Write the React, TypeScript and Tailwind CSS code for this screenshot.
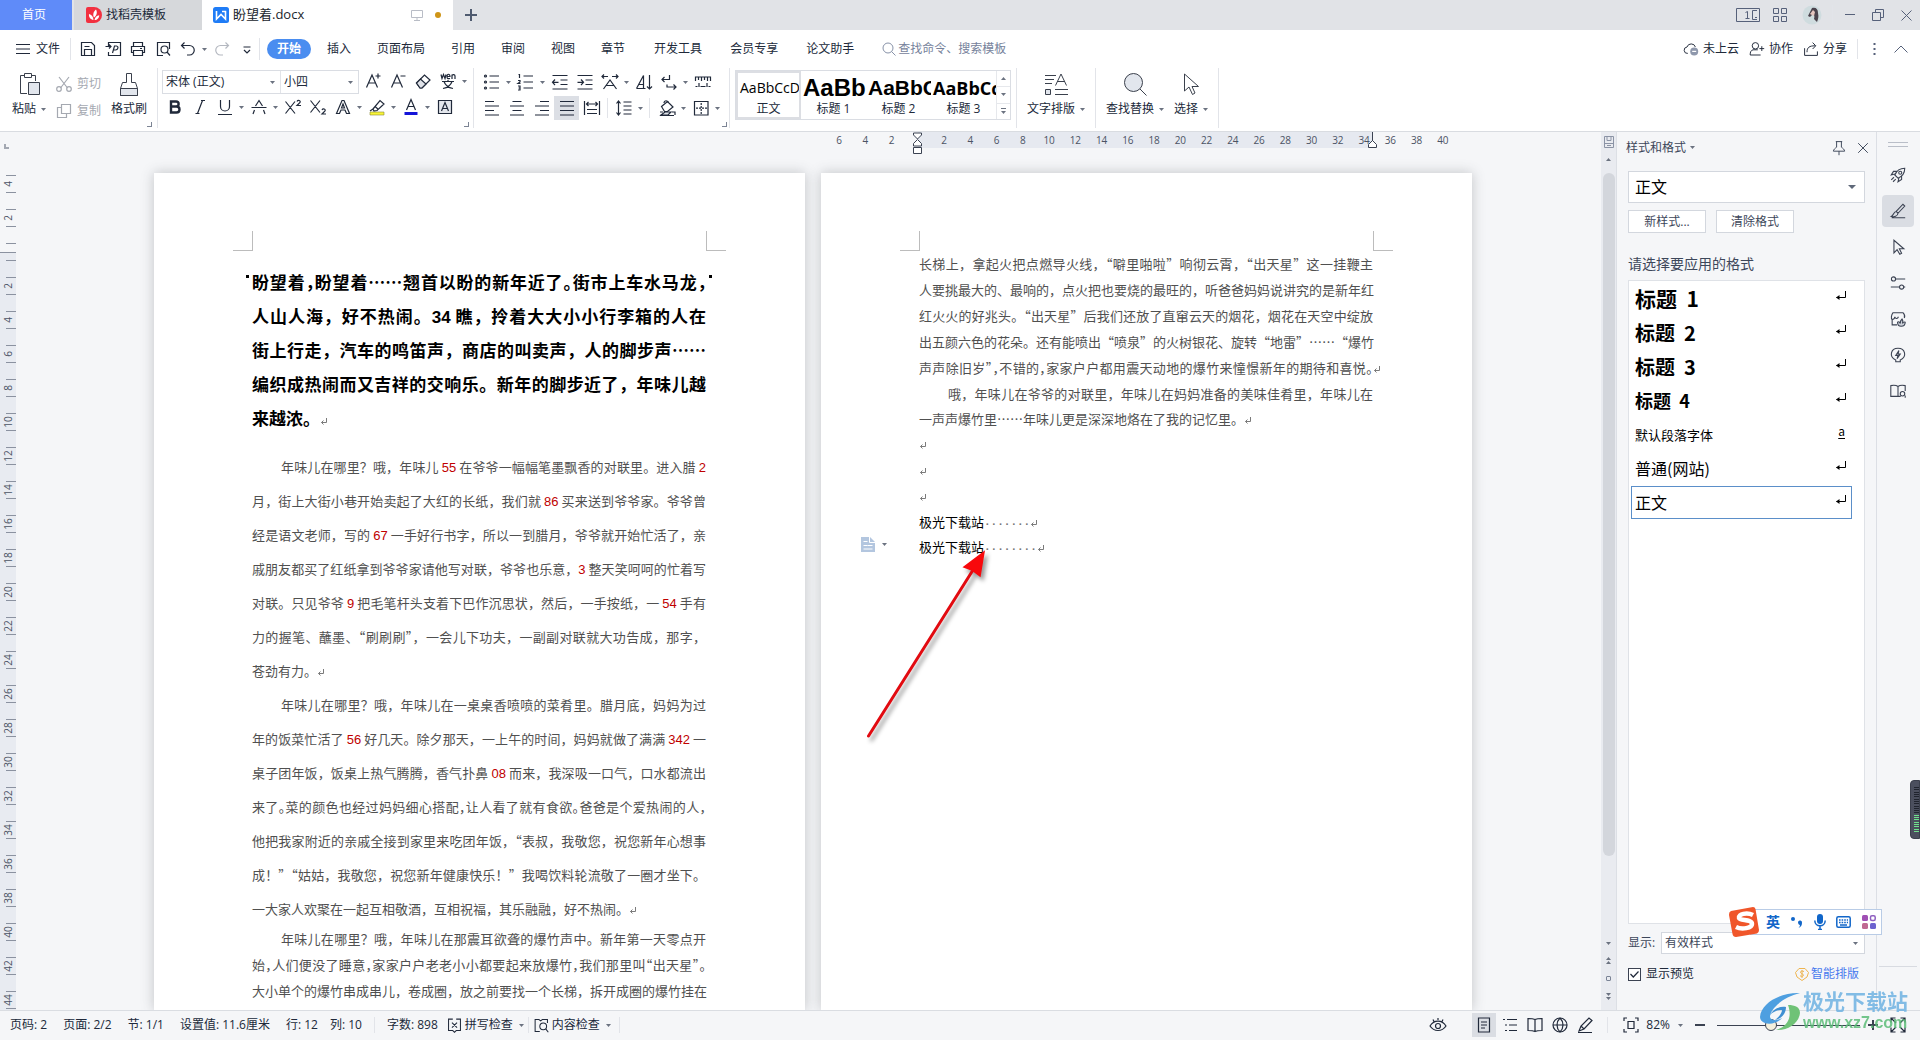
import type { ReactNode } from "react";

type IconProps = { children: ReactNode; className?: string; size?: number };

function Icon({ children, className = "", size = 20 }: IconProps) {
  return (
    <svg
      width={size}
      height={size}
      viewBox="0 0 20 20"
      fill="none"
      stroke="currentColor"
      strokeWidth="1.2"
      className={`shrink-0 ${className}`}
      aria-hidden="true"
    >
      {children}
    </svg>
  );
}

function Caret({ className = "" }: { className?: string }) {
  return (
    <svg width="5" height="3" viewBox="0 0 5 3" className={`shrink-0 fill-[#6b7280] ${className}`} aria-hidden="true">
      <path d="M0 0h5L2.5 3z" />
    </svg>
  );
}

function Tool({ label, children, caret, active }: { label: string; children: ReactNode; caret?: boolean; active?: boolean }) {
  return (
    <button type="button" aria-label={label} className="flex h-6 items-center">
      <span className={`flex h-6 w-[25px] items-center justify-center ${active ? "bg-[#dcdfe5]" : ""}`}>
        <Icon>{children}</Icon>
      </span>
      {caret && (
        <span className="flex w-[9px] justify-center">
          <Caret />
        </span>
      )}
    </button>
  );
}

function Divider({ className = "" }: { className?: string }) {
  return <div className={`w-px shrink-0 bg-[#e2e4e9] ${className}`} />;
}

function TabBar() {
  return (
    <header className="flex h-[30px] shrink-0 bg-[#e1e3e7]">
      <button type="button" className="w-[72px] bg-[#5f8bf9] pr-1 text-xs text-white">
        首页
      </button>
      <button type="button" className="ml-0.5 flex w-32 items-center gap-1 bg-[#d6d8db] pl-3 text-xs">
        <svg width="16" height="16" viewBox="0 0 16 16" aria-hidden="true">
          <path d="M0 2a2 2 0 0 1 2-2h6a8 8 0 0 1 0 16H2a2 2 0 0 1-2-2z" fill="#f2303f" />
          <path d="M7.500 13C4.500 12.500 2.500 10 3 7c2.500.500 4.500 2.500 4.500 6zM8 10.500C6.500 7.500 7.500 4.500 10 2.500c1.500 2.500 1 6-2 8zM8.500 13c.500-2.500 2-4.500 4.700-4.800 0 2.600-1.700 4.800-4.700 4.800z" fill="#fff" />
        </svg>
        找稻壳模板
      </button>
      <div className="flex w-[251px] items-center bg-white pl-[11px] text-[13px] text-[#20242c]">
        <svg width="16" height="16" viewBox="0 0 16 16" aria-hidden="true">
          <rect width="16" height="16" rx="2.500" fill="#1f7cf6" />
          <path d="M3.500 4v8L8 7.500 12.500 12V4.500H9" fill="none" stroke="#fff" strokeWidth="1.600" />
        </svg>
        <span className="ml-1">盼望着.docx</span>
        <svg width="12" height="12" viewBox="0 0 12 12" fill="none" stroke="#b9bdc6" className="ml-auto" aria-hidden="true">
          <path d="M.5 1.500h11v7H.5zM6 8.500v3M3 11.500h6" />
        </svg>
        <span className="mr-3 ml-3 size-1.5 rounded-full bg-[#cf9518]" />
      </div>
      <button type="button" aria-label="新建" className="flex w-9 items-center justify-center text-[#4f5b70]">
        <svg width="12" height="12" viewBox="0 0 12 12" stroke="currentColor" strokeWidth="2" aria-hidden="true">
          <path d="M6 0v12M0 6h12" />
        </svg>
      </button>
      <div className="ml-auto flex items-center text-[#56617a]">
        <svg width="24" height="14" viewBox="0 0 24 14" fill="none" stroke="currentColor" aria-hidden="true">
          <path d="M.5.500h23v13H.5zM9.500 4.500l2-1v7M9.500 10.500h4M21 2.500h-4.500v9H21M19 9.500h2" />
        </svg>
        <svg width="14" height="14" viewBox="0 0 14 14" fill="none" stroke="currentColor" className="ml-[13px]" aria-hidden="true">
          <path d="M.5.500h5v5h-5zM8.500.500h5v5h-5zM.5 8.500h5v5h-5zM8.500 8.500h5v5h-5z" />
        </svg>
        <svg width="20" height="20" viewBox="0 0 20 20" className="ml-[15px]" aria-hidden="true">
          <circle cx="10" cy="10" r="9.500" fill="#cfdcdf" />
          <path d="M10 3c4-1 6 1 6 5 1 4 0 6-1 9l-3-3c1-3 0-4-1-5l-3 3-2-1z" fill="#4b434d" />
          <path d="M8 9l3-4 2 2-1 4z" fill="#e6c6c0" />
        </svg>
        <Divider className="ml-2.5 h-5 bg-[#c9ccd3]" />
        <button type="button" aria-label="最小化" className="ml-3">
          <svg width="10" height="10" viewBox="0 0 10 10" stroke="currentColor" aria-hidden="true">
            <path d="M0 4.500h10" />
          </svg>
        </button>
        <button type="button" aria-label="还原" className="ml-[17px]">
          <svg width="12" height="12" viewBox="0 0 12 12" fill="none" stroke="currentColor" aria-hidden="true">
            <path d="M.5 3.500h8v8h-8zM3.500 3.500v-3h8v8h-3" />
          </svg>
        </button>
        <button type="button" aria-label="关闭" className="mr-2 ml-[17px]">
          <svg width="11" height="11" viewBox="0 0 11 11" stroke="currentColor" aria-hidden="true">
            <path d="M.5.500l10 10M10.500.500l-10 10" />
          </svg>
        </button>
      </div>
    </header>
  );
}

const MENUS = ["插入", "页面布局", "引用", "审阅", "视图", "章节"];
const EXTRA_MENUS = ["开发工具", "会员专享", "论文助手"];

function MenuBar() {
  return (
    <nav className="flex h-[38px] shrink-0 items-center text-xs text-[#20293a]">
      <button type="button" className="flex items-center gap-1.5 pl-4">
        <svg width="14" height="10" viewBox="0 0 14 10" stroke="currentColor" aria-hidden="true">
          <path d="M0 .500h14M0 5h14M0 9.500h14" />
        </svg>
        文件
      </button>
      <Divider className="mr-1 ml-2.5 h-[22px]" />
      <Tool label="保存">
        <path d="M3.500 3.500h10l3 3v10h-13zM6.500 16v-5.500h7V16M6.500 7.500h5" />
      </Tool>
      <Tool label="输出为PDF">
        <path d="M5.500 7V3.500h12v13h-12V13M2.500 7.500h5.500M6 5.500l2 2-2 2M9.500 14l2-7h2c2.500.500 1.500 4-1 4h-2" />
      </Tool>
      <Tool label="打印">
        <path d="M5.500 7V3.500h9V7M5.500 13.500h-2V7.500h13v6h-2M5.500 11.500h9v5h-9zM12 9.500h2" />
      </Tool>
      <Tool label="打印预览">
        <path d="M10 16.500H4.500v-13h12V10" />
        <circle cx="11.500" cy="10.500" r="3.500" />
        <path d="M14 13l3 3.500" />
      </Tool>
      <Tool label="撤销" caret>
        <path d="M6.500 3.500l-3 3 3 3M3.500 6.500h8a4.500 4.500 0 0 1 0 9.500H9" />
      </Tool>
      <span className="text-[#b4b8c0]">
        <Tool label="恢复">
          <path d="M13.500 3.500l3 3-3 3M16.500 6.500h-8a4.500 4.500 0 0 0 0 9.500H11" />
        </Tool>
      </span>
      <Tool label="自定义快速访问">
        <path d="M6.500 8h7M7 11l3 3 3-3" />
      </Tool>
      <Divider className="mr-[7px] h-[22px]" />
      <button type="button" className="mr-4 h-5 w-11 rounded-full bg-[#4a8df0] font-bold text-white">
        开始
      </button>
      <div className="flex gap-[26px]">
        {MENUS.map((name) => (
          <button key={name} type="button" className="whitespace-nowrap">
            {name}
          </button>
        ))}
      </div>
      <div className="ml-[29px] flex gap-7">
        {EXTRA_MENUS.map((name) => (
          <button key={name} type="button" className="whitespace-nowrap">
            {name}
          </button>
        ))}
      </div>
      <label className="ml-7 flex items-center gap-0.5 text-[#8792a8]">
        <svg width="14" height="14" viewBox="0 0 14 14" fill="none" stroke="currentColor" aria-hidden="true">
          <circle cx="6" cy="6" r="5" />
          <path d="M9.500 9.500l4 4" />
        </svg>
        <input aria-label="查找命令" placeholder="查找命令、搜索模板" className="w-32 bg-transparent placeholder:text-[#76829b]" />
      </label>
      <div className="ml-auto flex items-center pr-3">
        <button type="button" className="flex items-center gap-1">
          <Icon size={16}>
            <path d="M6 15.500a4 4 0 0 1-1-8 5.500 5.500 0 0 1 10.500 0" />
            <circle cx="14" cy="13" r="5" fill="#8f98ac" stroke="none" />
            <path d="M11.500 13h5" stroke="#fff" strokeWidth="1.500" />
          </Icon>
          未上云
        </button>
        <button type="button" className="ml-2.5 flex items-center gap-1">
          <Icon size={16}>
            <circle cx="8" cy="6" r="4" />
            <path d="M11 11H5c-3 1-3.500 3-3.500 6.500h13M13 9.500h6M16 6.500v6" />
          </Icon>
          协作
        </button>
        <button type="button" className="ml-2.5 flex items-center gap-1">
          <Icon size={16}>
            <path d="M2 9v9h16v-5M5 14c0-6 3-8 10-8M12 2l4 4-4 4" />
          </Icon>
          分享
        </button>
        <Divider className="ml-2.5 h-5" />
        <button type="button" aria-label="更多" className="ml-2 w-4 text-[#56617a]">
          <svg width="3" height="12" viewBox="0 0 3 12" fill="currentColor" className="mx-auto" aria-hidden="true">
            <path d="M.5 0h2v2h-2zM.5 5h2v2h-2zM.5 10h2v2h-2z" />
          </svg>
        </button>
        <button type="button" aria-label="收起功能区" className="ml-3 text-[#56617a]">
          <svg width="14" height="8" viewBox="0 0 14 8" fill="none" stroke="currentColor" aria-hidden="true">
            <path d="M.5 7.500L7 1l6.500 6.500" />
          </svg>
        </button>
      </div>
    </nav>
  );
}

function BigTool({ label, children, caret = true, className = "" }: { label: string; children: ReactNode; caret?: boolean; className?: string }) {
  return (
    <button type="button" className={`flex shrink-0 flex-col items-center gap-[5px] ${className}`}>
      <svg width="24" height="24" viewBox="0 0 24 24" fill="none" stroke="#3a404c" aria-hidden="true">
        {children}
      </svg>
      <span className="flex items-center gap-[5px] leading-4 whitespace-nowrap">
        {label}
        {caret && <Caret />}
      </span>
    </button>
  );
}

function Launcher({ className = "" }: { className?: string }) {
  return <span className={`mb-1 size-[5px] shrink-0 self-end border-r border-b border-[#7c8494] ${className}`} />;
}

const PREVIEWS = [
  { name: "正文", sample: "AaBbCcD", font: "pl-0.5 text-sm" },
  { name: "标题 1", sample: "AaBb", font: "pl-0.5 font-['Liberation_Sans'] text-2xl font-bold" },
  { name: "标题 2", sample: "AaBbC", font: "pl-0.5 font-['Liberation_Sans'] text-[21px] font-bold" },
  { name: "标题 3", sample: "AaBbCc", font: "pl-0.5 text-lg font-bold" },
];

function Ribbon() {
  return (
    <div className="flex h-16 shrink-0 border-b border-[#d9dce1] text-xs text-[#20293a]">
      <div className="flex w-[153px] pt-1 pl-3">
        <BigTool label="粘贴">
          <path d="M8 3.500H3.500v18H10M14 3.500h4.500V9M7.500 1.500h7v4h-7z" />
          <path d="M11.500 10.500h11v12h-11z" fill="#e2e6ed" />
        </BigTool>
        <div className="ml-2 flex shrink-0 flex-col gap-1 whitespace-nowrap text-[#a5a9b1]">
          <button type="button" className="flex h-[23px] items-center gap-[3px]">
            <Icon>
              <path d="M5 3l8.500 11M15 3L6.500 14" />
              <circle cx="5" cy="15" r="2.300" />
              <circle cx="15" cy="15" r="2.300" />
            </Icon>
            剪切
          </button>
          <button type="button" className="flex h-[23px] items-center gap-[3px]">
            <Icon>
              <path d="M7.500 3.500h9v9h-9zM7 6.500H3.500v10h9V13" />
            </Icon>
            复制
          </button>
        </div>
        <BigTool label="格式刷" caret={false} className="ml-2.5">
          <path d="M3.500 16.500h17v7h-17z" fill="#e2e6ed" />
          <path d="M9.500 1.500h5v9h4l2 6v7h-17v-7l2-6h4z" />
        </BigTool>
        <Launcher />
      </div>
      <Divider className="ml-1 h-[60px]" />
      <div className="ml-1 flex">
        <div>
          <div className="flex items-center">
            <div className="mt-0.5 mr-px flex h-6 w-[197px] items-center border border-[#dadde3]">
              <select aria-label="字体" className="h-full w-[107px] appearance-none pl-[3px] outline-none">
                <option>宋体 (正文)</option>
              </select>
              <Caret className="mr-[5px]" />
              <Divider className="h-full" />
              <select aria-label="字号" className="h-full w-[67px] appearance-none pl-[3px] outline-none">
                <option>小四</option>
              </select>
              <Caret />
            </div>
            <Tool label="增大字号">
              <path d="M3.500 16.500L9 4l5.500 12.500M5.500 12h7M15 2.500v5M12.500 5h5" />
            </Tool>
            <Tool label="减小字号">
              <path d="M3.500 16.500L9 4l5.500 12.500M5.500 12h7M12.500 5h5" />
            </Tool>
            <Tool label="清除格式">
              <path d="M3.500 12l8-8 5.500 5-8 8H7z" />
              <path d="M3.500 12l4-4 5.500 5-4 4H7z" fill="#dfe2e8" />
            </Tool>
            <Tool label="拼音指南" caret>
              <path d="M3 3.500l1 4 1.500-4L7 7.500l1-4M9 5.500h3c0-3-3-3-3 0s1.500 2 3 2M14 8V3.500M14 4.500c1-1.500 3-1 3 .500v3M4 10.500h12M10 9v2M5 17.500c5-1 8-4 9-7M6 10.500c1 3 4 6 9 7" />
            </Tool>
          </div>
          <div className="flex pt-px">
            <Tool label="加粗">
              <path d="M6 4.500h5c3.500 0 3.500 5 0 5H6zM6 9.500h5.500c4 0 4 6 0 6H6z" strokeWidth="2.400" />
            </Tool>
            <Tool label="倾斜">
              <path d="M12.500 3.500L7.500 16.500M11 3.500h4M5.500 16.500h4" />
            </Tool>
            <Tool label="下划线" caret>
              <path d="M5.500 3v6.500a4.500 4.500 0 0 0 9 0V3M3 17.500h14" />
            </Tool>
            <Tool label="删除线" caret>
              <path d="M6.500 9L10 3.500 13.500 9M2.500 10.500h15M5.500 13l-1.500 4M14.500 13l1.500 4" />
            </Tool>
            <Tool label="上标">
              <path d="M2.500 4.500l9.500 12M12 4.500l-9.500 12M14 4.500c1-2 4-1 3 1L14 8.500h4" />
            </Tool>
            <Tool label="下标">
              <path d="M2.500 3.500l9.500 12M12 3.500l-9.500 12M14 13c1-2 4-1 3 1l-3 3h4" />
            </Tool>
            <Tool label="文字效果" caret>
              <path d="M3.500 16.500L9 3.500h2l5.500 13h-3L12 13H8l-1.500 3.500zM8.500 11L10 7l1.500 4z" />
            </Tool>
            <Tool label="突出显示" caret>
              <path d="M6 12l7-8.500 4 3.500-7 6.500-3 .500zM8 9.500l3.500 3M3 14l3-2" />
              <path d="M3 15h14v3H3z" fill="#f8f436" stroke="#8a8a3a" strokeWidth=".6" />
            </Tool>
            <Tool label="字体颜色" caret>
              <path d="M5.500 13L10 2.500 14.500 13M7 9.500h6" />
              <path d="M3.500 15h13v3h-13z" fill="#1414d8" stroke="none" />
            </Tool>
            <Tool label="字符底纹">
              <path d="M3.500 3.500h13v13h-13z" fill="#e4e7ed" />
              <path d="M6.500 14L10 5.500l3.500 8.500M7.500 11.500h5" />
            </Tool>
          </div>
        </div>
        <Launcher className="-ml-[5px]" />
      </div>
      <Divider className="ml-1 h-[60px]" />
      <div className="ml-[5px] flex w-[250px] justify-between">
        <div className="pt-0.5">
          <div className="flex">
            <Tool label="项目符号" caret>
              <circle cx="3.500" cy="4" r="1" />
              <circle cx="3.500" cy="10" r="1" />
              <circle cx="3.500" cy="16" r="1" />
              <path d="M7.500 4h9.500M7.500 10h9.500M7.500 16h9.500" />
            </Tool>
            <Tool label="编号" caret>
              <path d="M2.500 2.500h1v3.500M2 8.500h2v1.500l-2 1.500h2.500M2 14h2v4H2M2.500 16H4M7.500 4h9.500M7.500 10h9.500M7.500 16h9.500" />
            </Tool>
            <Tool label="减少缩进">
              <path d="M2.500 3.500h15M10.500 8h7M10.500 12.500h7M2.500 17h15M8.500 10.300h-6M5 7.500l-2.500 2.800L5 13" />
            </Tool>
            <Tool label="增加缩进">
              <path d="M2.500 3.500h15M10.500 8h7M10.500 12.500h7M2.500 17h15M2.500 10.300h6M6 7.500l2.500 2.800L6 13" />
            </Tool>
            <Tool label="中文版式" caret>
              <path d="M3.500 17L10 8l6.500 9M6 13.500h8M2 4.500h6M4 2.500l-2 2 2 2M12 4.500h6M16 2.500l2 2-2 2" />
            </Tool>
            <Tool label="排序">
              <path d="M2.500 16.500L9.500 3.500v13M5 12.500h4.500M2.500 16.500h9M15.500 3v14M13 14.500l2.500 2.500 2.500-2.500" />
            </Tool>
            <Tool label="换行符" caret>
              <path d="M10.500 3v4.500H3M5.500 5L3 7.500 5.500 10M8 12.500v2.500h9M14.500 12.500L17 15l-2.500 2.500" />
            </Tool>
            <Tool label="制表位">
              <path d="M2.500 9V5h15v4M2.500 14.500h2M7.500 14.500h5M15.500 14.500h2M5.500 5v3M8.500 5v4M11.500 5v3M14.500 5v4M6 11v4M14 11v4" />
            </Tool>
          </div>
          <div className="flex items-center pt-0.5">
            <Tool label="左对齐">
              <path d="M3 3.500h9M3 8h14M3 12.500h9M3 17h14" />
            </Tool>
            <Tool label="居中">
              <path d="M5.500 3.500h9M3 8h14M5.500 12.500h9M3 17h14" />
            </Tool>
            <Tool label="右对齐">
              <path d="M8 3.500h9M3 8h14M8 12.500h9M3 17h14" />
            </Tool>
            <Tool label="两端对齐" active>
              <path d="M3 3.500h14M3 8h14M3 12.500h14M3 17h14" />
            </Tool>
            <Tool label="分散对齐">
              <path d="M2.500 3v14M17.500 3v14M4.500 6h11M6.500 4l-2 2 2 2M13.500 4l2 2-2 2M5 11.500h10M5 15.500h10" />
            </Tool>
            <Divider className="mx-[3px] h-5" />
            <Tool label="行距" caret>
              <path d="M4.500 3v14M2.500 5.500l2-2.500 2 2.500M2.500 14.500l2 2.500 2-2.500M9.500 4h8M9.500 8h8M9.500 12h8M9.500 16h8" />
            </Tool>
            <Divider className="mx-1 h-5" />
            <Tool label="底纹颜色" caret>
              <path d="M4.500 8.500l6-5 5.500 5.500-5.500 4.500h-3zM7 5c0-3 4-3 5 0M3 17.500h14M3 14h3M15 14h3v3" />
              <path d="M4 17l4-3h6l-3 3z" fill="#dfe2e8" />
            </Tool>
            <Tool label="边框" caret>
              <path d="M3.500 3.500h13.500v13.500H3.500z" />
              <path d="M10.200 5v11M5 10.200h11" strokeDasharray="2 1" />
            </Tool>
          </div>
        </div>
        <Launcher className="mr-1" />
      </div>
      <Divider className="h-[60px]" />
      <div className="mt-0.5 ml-[5px] flex h-[50px] w-[276px] shrink-0 border border-[#dadde3]">
        {PREVIEWS.map((p, i) => (
          <button
            key={p.name}
            type="button"
            className={`flex w-[65px] flex-col items-center overflow-hidden text-black ${i === 0 ? "border-2 border-[#dcdee3]" : "border-y-2 border-transparent"}`}
          >
            <span className={`h-[29px] w-full overflow-hidden text-left leading-[30px] ${p.font}`}>{p.sample}</span>
            <span className="leading-4 text-[#20293a]">{p.name}</span>
          </button>
        ))}
        <div className="flex flex-1 flex-col divide-y divide-[#e6e8ec] border-l border-[#e6e8ec]">
          <button type="button" aria-label="上一行" className="flex flex-1 items-center justify-center">
            <Caret className="rotate-180" />
          </button>
          <button type="button" aria-label="下一行" className="flex flex-1 items-center justify-center">
            <Caret />
          </button>
          <button type="button" aria-label="更多样式" className="flex flex-1 flex-col items-center justify-center gap-0.5">
            <span className="h-px w-[5px] bg-[#6b7280]" />
            <Caret />
          </button>
        </div>
      </div>
      <Divider className="ml-[5px] h-[60px]" />
      <div className="flex gap-2.5 pt-1 pl-2.5">
        <BigTool label="文字排版">
          <path d="M1 3.500h11M1 7.500h9M1 11.500h7M11.500 13.500L17 2l5.500 11.500M13 9.500h8M11 17.500h13M11 22.500h13" />
          <path d="M1.500 17.500h5v5h-5z" fill="#e2e6ed" />
        </BigTool>
        <Divider className="-mt-1 h-[60px]" />
        <BigTool label="查找替换">
          <circle cx="10.500" cy="10.500" r="9" fill="#e2e6ed" />
          <path d="M17 17l6.500 6.500" />
        </BigTool>
        <BigTool label="选择">
          <path d="M5.500 2v17l4.500-4 3.500 7.500 2.500-1.500-3-6.500h6.500z" />
        </BigTool>
        <Divider className="-mt-1 h-[60px]" />
      </div>
    </div>
  );
}

const H_RULER = Array.from({ length: 24 }, (_, i) => Math.abs(i * 2 - 6));
const V_RULER = Array.from({ length: 25 }, (_, i) => Math.abs(i * 2 - 4));

function VerticalRuler() {
  return (
    <div className="relative w-4 shrink-0 overflow-hidden text-[10px] text-[#4b5364]">
      <div className="h-[35px] pt-3 pl-1">
        <div className="size-[5px] border-b-2 border-l-2 border-[#a3a8b2]" />
      </div>
      {V_RULER.map((n, i) => (
        <div key={i} className={`h-[34px] pt-2 ${i > 2 ? "bg-[#e8ebf1]" : ""} ${i === 2 ? "bg-linear-to-b from-transparent from-50% to-[#e8ebf1] to-50%" : ""}`}>
          <div className="flex h-[18px] w-full flex-col">
            <span className="ml-1.5 h-px shrink-0 bg-[#8b92a0]" />
            <span className="flex flex-1 items-center justify-center">
              {n === 0 ? <i className="h-px w-4 bg-[#8b92a0]" /> : <b className="-rotate-90 leading-none font-normal">{n}</b>}
            </span>
            <span className="ml-1.5 h-px shrink-0 bg-[#8b92a0]" />
          </div>
        </div>
      ))}
    </div>
  );
}

function HorizontalRuler() {
  return (
    <div className="flex h-4 w-[1318px] justify-end pr-4">
      <div className="relative flex w-[630px] text-[10px] leading-4 text-[#4b5364]">
        <div className="absolute inset-y-0 left-[92px] w-[454px] bg-[#e6e9f0]" />
        {H_RULER.map((n, i) => (
          <span key={i} className="relative flex-1 text-center">
            {n === 0 ? (
              <svg width="9" height="22" viewBox="0 0 9 22" fill="#fff" stroke="#3b4252" className="mx-auto" aria-hidden="true">
                <path d="M.5 1h8v2l-4 4-4-4zM.5 14v-2.500l4-4 4 4V14zM.5 15.500h8v6h-8z" />
              </svg>
            ) : (
              n
            )}
          </span>
        ))}
        <svg width="9" height="16" viewBox="0 0 9 16" fill="#fff" stroke="#3b4252" className="absolute top-0 left-[542px]" aria-hidden="true">
          <path d="M4.500 0v9M.500 15.500V12.500l4-4 4 4v3z" />
        </svg>
      </div>
    </div>
  );
}

function Mark() {
  return (
    <span className="inline-block w-0 whitespace-nowrap">
      <svg width="6" height="7" viewBox="0 0 6 7" fill="none" stroke="#7a7a7a" className="ml-px inline align-baseline" aria-hidden="true">
        <path d="M5.500 0v4.500h-5M2.500 2.500l-2 2 2 2" />
      </svg>
    </span>
  );
}

// Digits get their own run so they can take another face and colour.
function Line({ text, end, tight, indent, mark }: { text: string; end?: boolean; tight?: boolean; indent?: boolean; mark?: boolean }) {
  return (
    <div
      className={`whitespace-nowrap ${end ? "text-left" : "text-justify [text-align-last:justify]"} ${tight ? "[font-feature-settings:'halt']" : ""} ${indent ? "pl-[29px]" : ""}`}
    >
      {text.split(/(\d+)/).map((part, i) =>
        /^\d+$/.test(part) ? (
          <span key={i} className="font-['Liberation_Sans'] leading-none group-data-[body=true]:text-[#c00000]">
            {part}
          </span>
        ) : (
          part
        ),
      )}
      {mark && <Mark />}
    </div>
  );
}

function Page({ children }: { children: ReactNode }) {
  return (
    <article className="relative h-full w-[651px] shrink-0 bg-white shadow-[0_0_12px_rgba(60,64,72,0.28)]">
      <div className="flex h-[78px] items-end justify-between px-[79px]">
        <span className="size-5 border-r border-b border-[#bcbcbc]" />
        <span className="size-5 border-b border-l border-[#bcbcbc]" />
      </div>
      <div className="pr-[99px] pl-[98px] font-['Noto_Sans_CJK_SC',sans-serif] text-[13px] text-[#505050]">{children}</div>
    </article>
  );
}

function PageOne() {
  return (
    <Page>
      <div className="relative pt-3.5 text-[17px] leading-[34px] font-bold text-black">
        <span className="absolute top-6 -left-1.5 size-[3px] bg-black" />
        <span className="absolute top-6 -right-1.5 size-[3px] bg-black" />
        <div className="*:h-[34px]">
          <Line tight text="盼望着，盼望着……翘首以盼的新年近了。街市上车水马龙，" />
          <Line text="人山人海，好不热闹。34 瞧，拎着大大小小行李箱的人在" />
          <Line text="街上行走，汽车的鸣笛声，商店的叫卖声，人的脚步声……" />
          <Line text="编织成热闹而又吉祥的交响乐。新年的脚步近了，年味儿越" />
          <Line end mark text="来越浓。" />
        </div>
      </div>
      <div className="group pt-[15px] leading-[34px] *:h-[34px]" data-body="true">
        <Line indent text="年味儿在哪里？哦，年味儿 55 在爷爷一幅幅笔墨飘香的对联里。进入腊 2" />
        <Line text="月，街上大街小巷开始卖起了大红的长纸，我们就 86 买来送到爷爷家。爷爷曾" />
        <Line text="经是语文老师，写的 67 一手好行书字，所以一到腊月，爷爷就开始忙活了，亲" />
        <Line text="戚朋友都买了红纸拿到爷爷家请他写对联，爷爷也乐意，3 整天笑呵呵的忙着写" />
        <Line text="对联。只见爷爷 9 把毛笔杆头支着下巴作沉思状，然后，一手按纸，一 54 手有" />
        <Line text="力的握笔、蘸墨、“刷刷刷”，一会儿下功夫，一副副对联就大功告成，那字，" />
        <Line end mark text="苍劲有力。" />
        <Line indent text="年味儿在哪里？哦，年味儿在一桌桌香喷喷的菜肴里。腊月底，妈妈为过" />
        <Line text="年的饭菜忙活了 56 好几天。除夕那天，一上午的时间，妈妈就做了满满 342 一" />
        <Line text="桌子团年饭，饭桌上热气腾腾，香气扑鼻 08 而来，我深吸一口气，口水都流出" />
        <Line tight text="来了。菜的颜色也经过妈妈细心搭配，让人看了就有食欲。爸爸是个爱热闹的人，" />
        <Line text="他把我家附近的亲戚全接到家里来吃团年饭，“表叔，我敬您，祝您新年心想事" />
        <Line text="成！”“姑姑，我敬您，祝您新年健康快乐！”我喝饮料轮流敬了一圈才坐下。" />
        <Line end mark text="一大家人欢聚在一起互相敬酒，互相祝福，其乐融融，好不热闹。" />
      </div>
      <div className="leading-[26px] *:h-[26px]">
        <Line indent text="年味儿在哪里？哦，年味儿在那震耳欲聋的爆竹声中。新年第一天零点开" />
        <Line tight text="始，人们便没了睡意，家家户户老老小小都要起来放爆竹，我们那里叫“出天星”。" />
        <Line text="大小单个的爆竹串成串儿，卷成圈，放之前要找一个长梯，拆开成圈的爆竹挂在" />
      </div>
    </Page>
  );
}

function PageTwo() {
  return (
    <Page>
      <div className="leading-[26px] *:h-[26px]">
        <Line text="长梯上，拿起火把点燃导火线，“噼里啪啦”响彻云霄，“出天星”这一挂鞭主" />
        <Line text="人要挑最大的、最响的，点火把也要烧的最旺的，听爸爸妈妈说讲究的是新年红" />
        <Line text="红火火的好兆头。“出天星”后我们还放了直窜云天的烟花，烟花在天空中绽放" />
        <Line text="出五颜六色的花朵。还有能喷出“喷泉”的火树银花、旋转“地雷”……“爆竹" />
        <Line tight mark text="声声除旧岁”，不错的，家家户户都用震天动地的爆竹来憧憬新年的期待和喜悦。" />
      </div>
      <div className="leading-[25px] *:h-[25px]">
        <Line indent text="哦，年味儿在爷爷的对联里，年味儿在妈妈准备的美味佳肴里，年味儿在" />
        <Line end mark text="一声声爆竹里……年味儿更是深深地烙在了我的记忆里。" />
      </div>
      <div className="leading-[26px] *:h-[26px]">
        <Line end mark text="" />
        <Line end mark text="" />
        <Line end mark text="" />
      </div>
      <div className="leading-[25px] text-black *:h-[25px]">
        {["·······", "········"].map((dots) => (
          <div key={dots} className="whitespace-nowrap">
            极光下载站
            <span className="font-['Liberation_Mono'] text-[11px] leading-none font-bold text-[#777]">{dots}</span>
            <Mark />
          </div>
        ))}
      </div>
      <button type="button" aria-label="段落选项" className="absolute top-[364px] left-10 flex items-center gap-[7px]">
        <svg width="14" height="15" viewBox="0 0 14 15" aria-hidden="true">
          <path d="M0 0h9l5 5v10H0z" fill="#b3c6df" />
          <path d="M8.500 0v5.500H14M2.500 4.500h4M2.500 8.500h4M6.500 8.500h5M2.500 12h9" stroke="#fff" fill="none" />
        </svg>
        <Caret />
      </button>
      <svg width="140" height="210" viewBox="0 0 140 210" className="absolute top-[370px] left-10 drop-shadow-[3px_4px_2px_rgba(0,0,0,0.4)]" aria-hidden="true">
        <path d="M7.500 193L112 27" stroke="#e20a10" strokeWidth="3" strokeLinecap="round" />
        <path d="M123 9L119 33l-8-6-8-3z" fill="#f8080c" stroke="#f8080c" strokeWidth="1.500" />
      </svg>
    </Page>
  );
}

function ScrollBar() {
  return (
    <div className="flex w-[15px] shrink-0 flex-col items-center bg-[#e9ebf0] text-[#8b93a5]">
      <svg width="10" height="12" viewBox="0 0 10 12" fill="none" stroke="currentColor" className="my-1 shrink-0" aria-hidden="true">
        <path d="M.5.500h9v11h-9zM3 .500v4h4v-4M.5 7.500h9M3 9.500h4" />
      </svg>
      <Caret className="mt-1.5 rotate-180" />
      <div className="mt-3 h-[683px] w-3 rounded-full bg-[#d3d6dc]" />
      <div className="mt-auto flex flex-col items-center gap-3 pb-2.5">
        <Caret />
        <span className="flex flex-col gap-px">
          <Caret className="rotate-180" />
          <Caret className="rotate-180" />
        </span>
        <span className="size-[5px] rounded-[1px] border border-[#7b8496]" />
        <span className="flex flex-col gap-px">
          <Caret />
          <Caret />
        </span>
      </div>
    </div>
  );
}

const STYLES = [
  { name: "标题  1", look: "text-[21px] font-bold" },
  { name: "标题  2", look: "text-xl font-bold" },
  { name: "标题  3", look: "text-xl font-bold" },
  { name: "标题  4", look: "text-lg font-bold" },
  { name: "默认段落字体", look: "text-[13px]" },
  { name: "普通(网站)", look: "text-base" },
  { name: "正文", look: "text-base" },
];

function StylePanel() {
  return (
    <aside className="flex w-[260px] shrink-0 flex-col border-l border-[#dcdfe5] px-[11px] text-xs text-[#3d475a]">
      <div className="flex h-[39px] items-center pb-2">
        <h2 className="-ml-0.5">样式和格式</h2>
        <Caret className="ml-1" />
        <button type="button" aria-label="固定" className="ml-auto">
          <Icon size={16}>
            <path d="M6 2h8M7 2v7c-2 1.500-4 3-4 5h14c0-2-2-3.500-4-5V2M10 14v5" />
          </Icon>
        </button>
        <button type="button" aria-label="关闭面板" className="-mr-1.5 ml-2">
          <Icon size={16}>
            <path d="M4 4l12 12M16 4L4 16" />
          </Icon>
        </button>
      </div>
      <div className="flex h-8 shrink-0 items-center border border-[#d3d7de] bg-white pr-2">
        <select aria-label="当前样式" className="h-full flex-1 appearance-none pl-1.5 text-base text-black outline-none">
          <option>正文</option>
        </select>
        <svg width="8" height="4" viewBox="0 0 8 4" className="fill-[#5f6879]" aria-hidden="true">
          <path d="M0 0h8L4 4z" />
        </svg>
      </div>
      <div className="mt-[7px] flex gap-2.5">
        <button type="button" className="h-[23px] w-[78px] border border-[#d3d7de] bg-white">
          新样式...
        </button>
        <button type="button" className="h-[23px] w-[78px] border border-[#d3d7de] bg-white">
          清除格式
        </button>
      </div>
      <h3 className="mt-[21px] text-sm leading-5">请选择要应用的格式</h3>
      <ul className="mt-1.5 flex-1 border border-[#dfe2e7] bg-white py-px pr-3 pl-0.5 font-['Noto_Sans_CJK_SC',sans-serif] text-black">
        {STYLES.map((s, i) => (
          <li key={s.name} className="h-[34px]">
            <button
              type="button"
              className={`flex h-[33px] w-full items-start justify-between border pr-[5px] pl-[3px] ${i === 6 ? "border-[#5b8fc9]" : "border-transparent"}`}
            >
              <span className={`leading-[31px] whitespace-pre ${s.look}`}>{s.name}</span>
              {i === 4 ? (
                <span className="pt-1 pr-px leading-4 underline underline-offset-2">a</span>
              ) : (
                <svg width="10" height="9" viewBox="0 0 10 9" fill="none" stroke="#000" className="mt-2" aria-hidden="true">
                  <path d="M9.500 0v6.500h-9" />
                  <path d="M3.500 4v5L0 6.500z" fill="#000" stroke="none" />
                </svg>
              )}
            </button>
          </li>
        ))}
      </ul>
      <div className="mt-2 flex items-center">
        <label htmlFor="style-filter" className="w-[33px] shrink-0">
          显示:
        </label>
        <div className="flex h-[22px] flex-1 items-center border border-[#d3d7de] bg-white pr-1.5">
          <select id="style-filter" className="h-full flex-1 appearance-none pl-[3px] outline-none">
            <option>有效样式</option>
          </select>
          <Caret />
        </div>
      </div>
      <div className="flex items-center pt-3 pb-7">
        <label className="flex items-center gap-[5px] text-[#20293a]">
          <input type="checkbox" defaultChecked className="size-[13px] appearance-none border border-[#3b4252] bg-white" />
          <svg width="9" height="7" viewBox="0 0 9 7" fill="none" stroke="#20293a" strokeWidth="1.200" className="-ml-4 mr-0.5" aria-hidden="true">
            <path d="M.5 3l2.800 3L8.500.500" />
          </svg>
          显示预览
        </label>
        <a href="#layout" className="mr-1.5 ml-auto flex items-center gap-0.5 text-[#4879ee]">
          <svg width="14" height="14" viewBox="0 0 14 14" fill="none" stroke="#eeb44f" aria-hidden="true">
            <path d="M4 1.500h6l3.500 4-1.500 4.500-5 3.500-5-3.500L.5 5.500z" />
            <path d="M9 4.500c-4-1.500-4.500 1.500-2 2.300 3 1 1 3.700-2 2M7 3v8" />
          </svg>
          智能排版
        </a>
      </div>
    </aside>
  );
}

function SideTool({ label, active, children }: { label: string; active?: boolean; children: ReactNode }) {
  return (
    <button type="button" aria-label={label} className={`flex size-8 items-center justify-center rounded-sm ${active ? "bg-[#dadde3]" : ""}`}>
      <Icon size={18}>{children}</Icon>
    </button>
  );
}

function SideBar() {
  return (
    <div className="relative flex w-11 shrink-0 flex-col items-center gap-1 border-l border-[#dcdfe5] pr-0.5 text-[#3b4252]">
      <div className="mt-2.5 mb-2 h-[5px] w-5 border-y border-[#b9bec8]" />
      <SideTool label="快捷">
        <path d="M6.500 10c2-5 5-7.500 11-7.500 0 6-2.500 9-7.500 11zM6.500 9l-4 1 2.500-4h4M11 13.500l-1 4 4-2.500v-4M5.500 12.500l-3 3M7.500 14.500l-3 3" />
        <circle cx="12.500" cy="7.500" r="1.700" />
      </SideTool>
      <SideTool label="样式" active>
        <path d="M8 10.500l7.500-8 2 2-7.500 8M8 10.500c-3 0-2.500 4-5.500 5.500 3.500 1 7 0 7.500-3.500zM3 17.500h15" />
      </SideTool>
      <SideTool label="选择">
        <path d="M5.500 2.500v14l3.500-3.500 3 5 2-1-2.500-5h5z" />
      </SideTool>
      <SideTool label="设置">
        <circle cx="5" cy="5.500" r="2.300" />
        <path d="M7.500 5.500H18M2 14.500h9.500M16.500 14.500H18" />
        <circle cx="14" cy="14.500" r="2.300" />
      </SideTool>
      <SideTool label="素材">
        <path d="M9 16.500H3.500v-6c-1.500-1-1-5 1-7.500h11c2 2 2.500 4 1.500 6M3.500 10.500c2 0 3-1.500 3-3 0 2 3 3 4 0" />
        <path d="M9.500 13.500c1.500-1 2.500 0 3 1.500 0-2 .500-4 2-5 1 1 1 3 .500 5 .500-1.500 1.500-2 3-1.500 0 3-2 4.500-4.500 4.500s-4-1.500-4-4.500z" fill="#cbd0d9" />
      </SideTool>
      <SideTool label="灵感">
        <path d="M7.500 15.500C-.5 12 2 2.500 10 2.500s10.500 9.500 2.500 13v2h-5zM11 5L7.500 10.500H10L9 14l3.500-5H10z" />
      </SideTool>
      <SideTool label="查阅">
        <path d="M10 5c-2-1.500-5-1.500-8-1v12h8zM10 5c2-1.500 5-1.500 8-1v6M10 16h3M18 15v2.500" />
        <circle cx="15" cy="13" r="2.500" />
      </SideTool>
      <div className="mt-auto mb-[43px] h-px w-[38px] bg-[#d8dbe1]" />
      <div className="absolute top-[648px] right-0 flex h-[59px] w-2.5 flex-col justify-between rounded-l border border-[#3b3f4c] bg-[#4b4f5e] py-1.5 pl-[3px]">
        {Array.from({ length: 20 }).map((_, i) => (
          <span key={i} className={`h-px ${i < 12 ? "bg-[#20242e]" : "bg-[#6fe08c]"}`} />
        ))}
      </div>
    </div>
  );
}

function StatusBar() {
  return (
    <footer className="flex h-[30px] shrink-0 items-center border-t border-[#dadde2] bg-[#f5f6f8] pb-px text-xs whitespace-nowrap text-[#20293a]">
      <div className="flex items-center gap-4 pl-2.5">
        <span>页码: 2</span>
        <span>页面: 2/2</span>
        <span>节: 1/1</span>
        <span>设置值: 11.6厘米</span>
        <span>行: 12</span>
        <span className="-ml-1">列: 10</span>
        <Divider className="-mx-1 h-4" />
        <span>字数: 898</span>
      </div>
      <button type="button" className="ml-2 flex items-center gap-0.5">
        <Icon size={17}>
          <path d="M8 2.500H3v13.500h5l2 2 2-2h5V2.500h-5M7 6.500l6 6M13 6.500l-6 6" />
        </Icon>
        拼写检查
        <Caret className="ml-1" />
      </button>
      <Divider className="mx-1 h-4" />
      <button type="button" className="flex items-center gap-0.5">
        <Icon size={17}>
          <path d="M8 17H2.500V3H7l2 1.500L11 3h6v4" />
          <circle cx="12" cy="11" r="4" />
          <path d="M15 14l3 4" />
        </Icon>
        内容检查
        <Caret className="ml-1" />
      </button>
      <Divider className="ml-2 h-4" />

      <div className="ml-auto flex items-center">
        <button type="button" aria-label="护眼模式" className="mr-6">
          <Icon>
            <path d="M2 11c4-6.500 12-6.500 16 0-4 6-12 6-16 0zM10 3v2M5 4.500l1 2M15 4.500l-1 2" />
            <circle cx="10" cy="11" r="2.500" />
          </Icon>
        </button>
        <button type="button" aria-label="页面视图" className="mr-px flex size-6 items-center justify-center bg-[#dadde3]">
          <Icon>
            <path d="M4.500 3h11v14h-11zM7 7h6M7 10h6M7 13h4" />
          </Icon>
        </button>
        <Tool label="大纲视图">
          <path d="M3 4.500h2M7 4.500h10M5 10h2M9 10h8M5 15.500h2M9 15.500h8" />
        </Tool>
        <Tool label="阅读版式">
          <path d="M10 4.500c-2-1-5-1-7-1v12c3 0 5 0 7 1 2-1 4-1 7-1v-12c-2 0-5 0-7 1zM10 4.500v12" />
        </Tool>
        <Tool label="Web版式">
          <circle cx="10" cy="10" r="7" />
          <path d="M3 10h14M10 3c-4 4-4 10 0 14M10 3c4 4 4 10 0 14" />
        </Tool>
        <Tool label="写作模式">
          <path d="M4 16l2-5 8-8 3 2.500L9 14zM6 11l3 3M3 17.500h14" />
        </Tool>
        <Divider className="mx-2.5 h-4" />
        <Tool label="最佳显示比例">
          <path d="M7 6.500h6v7H7zM3 6V3h3M14 3h3v3M3 14v3h3M17 14v3h-3" />
        </Tool>
        <button type="button" className="ml-[3px] flex items-center gap-2">
          82%
          <Caret />
        </button>
        <button type="button" aria-label="缩小" className="ml-3 h-0.5 w-2.5 bg-[#3b4252]" />
        <input
          type="range"
          aria-label="显示比例"
          defaultValue={37}
          className="mr-2 ml-3 h-3 w-[143px] appearance-none bg-[linear-gradient(#3b4252,#3b4252)] bg-[length:100%_1px] bg-center bg-no-repeat [&::-webkit-slider-thumb]:size-3 [&::-webkit-slider-thumb]:appearance-none [&::-webkit-slider-thumb]:rounded-full [&::-webkit-slider-thumb]:border [&::-webkit-slider-thumb]:border-[#3b4252] [&::-webkit-slider-thumb]:bg-[#f4efdc]"
        />
        <button type="button" aria-label="放大">
          <svg width="10" height="10" viewBox="0 0 10 10" stroke="#3b4252" strokeWidth="2" aria-hidden="true">
            <path d="M5 0v10M0 5h10" />
          </svg>
        </button>
        <button type="button" aria-label="全屏" className="mr-3 ml-2.5">
          <Icon>
            <path d="M3 7.500V3h4.500M3 3l5 5M12.500 3H17v4.500M17 3l-5 5M3 12.500V17h4.500M3 17l5-5M17 12.500V17h-4.500M17 17l-5-5" />
          </Icon>
        </button>
      </div>
    </footer>
  );
}

function ImeBar() {
  return (
    <div className="absolute right-[38px] bottom-[102px] flex items-center">
      <svg width="32" height="32" viewBox="0 0 32 32" className="relative -mr-2.5" aria-hidden="true">
        <path d="M3 5L25 1q2 0 2.500 2L31 24q0 3-2 3.500L8 31q-3 0-3.500-3L1 9q-.3-3 2-4z" fill="#f0562a" />
        <path d="M25 9c-6-3-15-1-14 3 1 3 13 1 13 6 0 4-10 6-16 3" fill="none" stroke="#fff" strokeWidth="4.500" />
      </svg>
      <div className="flex h-[26px] w-[132px] items-center justify-between border border-[#b9cce6] bg-white pr-[5px] pl-[15px] text-[#1166c9]">
        <span className="text-sm leading-4 font-bold">英</span>
        <svg width="12" height="12" viewBox="0 0 12 12" fill="currentColor" aria-hidden="true">
          <circle cx="2" cy="3" r="2" />
          <path d="M7 6a2 2 0 1 1 4 1c0 2-1 4-3.500 5 1-1 1.500-2 1.500-3-1 0-2-1-2-3z" />
        </svg>
        <svg width="12" height="16" viewBox="0 0 12 16" aria-hidden="true">
          <rect x="3" width="6" height="10" rx="3" fill="currentColor" />
          <path d="M.8 6.500c0 7 10.400 7 10.400 0M6 12v3.500M4 15.500h4" fill="none" stroke="currentColor" strokeWidth="1.500" />
        </svg>
        <svg width="15" height="12" viewBox="0 0 15 12" fill="none" stroke="currentColor" strokeWidth="1.500" aria-hidden="true">
          <rect x=".8" y=".8" width="13.400" height="10.400" rx="1.500" />
          <path d="M3 4h9M3 6.500h9" strokeDasharray="1.600 1" />
          <path d="M4 9h7" />
        </svg>
        <svg width="14" height="14" viewBox="0 0 14 14" aria-hidden="true">
          <rect width="6" height="6" rx="1.500" fill="#a04fb4" />
          <rect x="8.500" y=".8" width="4.700" height="4.700" rx="1.500" fill="none" stroke="#8f5fc0" strokeWidth="1.500" />
          <rect y="8" width="6" height="6" rx="1.500" fill="#c06a92" />
          <rect x="8" y="8" width="6" height="6" rx="1.500" fill="#6d63cf" />
        </svg>
      </div>
    </div>
  );
}

function Watermark() {
  return (
    <div className="pointer-events-none absolute right-3 bottom-[7px] flex items-center gap-0.5">
      <svg width="42" height="40" viewBox="0 0 42 40" aria-hidden="true">
        <path d="M41 2C24 1 2 11 1 26c0 3 2 5 5 6 6 2 14-1 17-5-5 3-11 3-12-1C11 18 24 6 41 2z" fill="#4e9fe0" />
        <path d="M11 24c3-6 9-9 16-8 0 7-5 12-11 13 4-3 7-7 7-10-5 0-9 2-12 5z" fill="#3f8fd2" />
        <path d="M29 14c7 0 12 2 12 8-1 10-12 18-24 17 10-3 17-11 12-25z" fill="#6fc277" />
      </svg>
      <div className="whitespace-nowrap opacity-85">
        <div className="text-[21px] leading-6 font-bold text-[#6fb2e2]">极光下载站</div>
        <div className="font-['Liberation_Sans'] text-base leading-5 font-bold text-[#5dbd78]">www.xz7.com</div>
      </div>
    </div>
  );
}

export default function App() {
  return (
    <div lang="zh-CN" className="relative flex h-screen flex-col overflow-hidden bg-white font-['Open_Sans','Noto_Sans_CJK_SC',sans-serif] text-[#20293a]">
      <TabBar />
      <MenuBar />
      <Ribbon />
      <main className="flex min-h-0 flex-1 bg-[#f5f6f8]">
        <VerticalRuler />
        <div className="flex min-w-0 flex-1 flex-col items-center overflow-hidden pl-[9px]">
          <HorizontalRuler />
          <div className="mt-[25px] flex min-h-0 flex-1 gap-4">
            <PageOne />
            <PageTwo />
          </div>
        </div>
        <ScrollBar />
        <StylePanel />
        <SideBar />
      </main>
      <StatusBar />
      <ImeBar />
      <Watermark />
    </div>
  );
}
